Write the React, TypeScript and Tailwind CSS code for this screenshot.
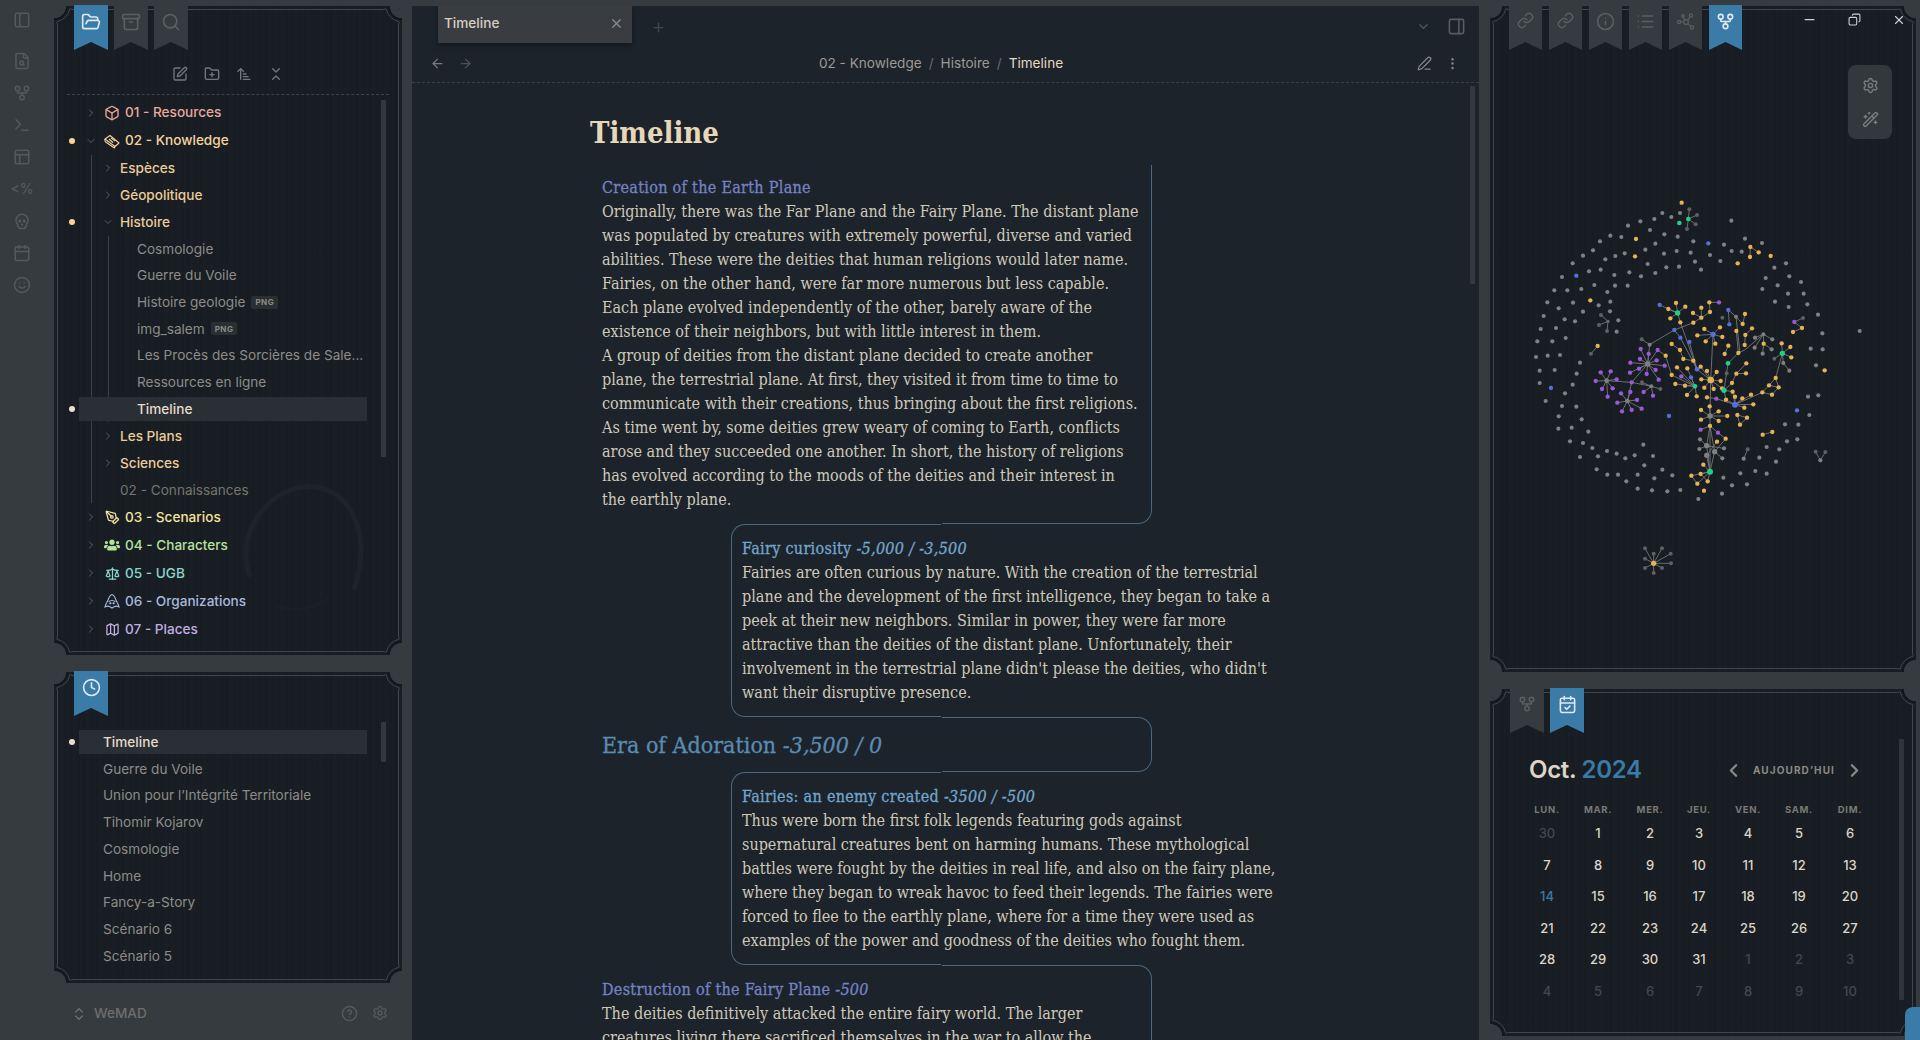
import React from "react";
import {
  FolderOpen, Archive, Search, SquarePen, FolderPlus, ArrowUpNarrowWide, ChevronsDownUp, Clock,
  ChevronRight, ChevronDown, Box, PenTool, Scale, Map as MapIcon, PanelLeft, FileSearch, GitFork,
  Terminal, PanelsTopLeft, Skull, Calendar, Smile, X, Plus, ArrowLeft, ArrowRight, PanelRight, PenLine,
  EllipsisVertical, Minus, Copy, Link, Info, List, Settings, WandSparkles, CalendarCheck, ChevronsUpDown,
  CircleHelp, ChevronLeft,
} from "lucide-react";
import { FaUsers } from "react-icons/fa";

const SANS = "font-['Inter','Liberation_Sans',sans-serif]";
const SERIF = "font-['DejaVu_Serif_Condensed','DejaVu_Serif',serif]";
const GRAIN =
  "bg-[#171d23] bg-[repeating-linear-gradient(90deg,rgba(255,255,255,0.007)_0px,rgba(255,255,255,0)_3px,rgba(0,0,0,0.035)_4px,rgba(255,255,255,0.006)_7px,rgba(0,0,0,0)_11px,rgba(0,0,0,0.03)_13px)]";

function Corner({ cls }: { cls: string }) {
  return (
    <svg width="18" height="18" viewBox="0 0 18 18" className={`absolute z-10 ${cls}`}>
      <rect width="18" height="18" fill="#171d23" />
      <path d="M0 0H13A13 13 0 0 1 0 13Z" fill="#363b3f" />
      <path d="M13 0A13 13 0 0 1 0 13" fill="none" stroke="#11161a" strokeWidth="1.5" />
      <path d="M18 3H15.7A16 16 0 0 1 3 15.7V18" fill="none" stroke="#40474c" strokeWidth="1" />
    </svg>
  );
}

function Panel({ className, children }: { className: string; children: React.ReactNode }) {
  return (
    <div className={`relative ${GRAIN} ${className}`}>
      <div className="absolute inset-[3px] border border-[#40474c] pointer-events-none" />
      <Corner cls="left-0 top-0" />
      <Corner cls="right-0 top-0 -scale-x-100" />
      <Corner cls="left-0 bottom-0 -scale-y-100" />
      <Corner cls="right-0 bottom-0 -scale-x-100 -scale-y-100" />
      <div className="relative z-20 h-full flex flex-col">{children}</div>
    </div>
  );
}

function Ribbon({ active, w, children }: { active?: boolean; w: string; children: React.ReactNode }) {
  return (
    <div
      className={`${w} h-[45px] pt-[7px] flex justify-center [clip-path:polygon(0_0,100%_0,100%_100%,50%_82%,0_100%)] ${
        active ? "bg-[#3a7ba8] text-[#dfe9ee]" : "bg-[#363b3f] text-[#5a5f62]"
      }`}
    >
      {children}
    </div>
  );
}

function Dot({ cls, color }: { cls: string; color: string }) {
  return <span className={`absolute top-1/2 -translate-y-1/2 w-[6px] h-[6px] rounded-full ${cls} ${color}`} />;
}

function Top({ icon, label, color, open, dot }: { icon: React.ReactNode; label: string; color: string; open?: boolean; dot?: boolean }) {
  return (
    <div className="relative h-[28px] flex items-center pl-[31px]">
      {dot && <Dot cls="left-[15px]" color="bg-[#fbd398]" />}
      <span className="w-[12px] flex justify-center text-[#6c7073]">
        {open ? <ChevronDown size={16} strokeWidth={1.6} /> : <ChevronRight size={16} strokeWidth={1.6} />}
      </span>
      <span className={`ml-[7px] w-[16px] flex justify-center ${color}`}>{icon}</span>
      <span className={`ml-[5px] text-[13.6px] font-medium ${color}`}>{label}</span>
    </div>
  );
}

function Sub({ label, open, dot }: { label: string; open?: boolean; dot?: boolean }) {
  return (
    <div className="relative h-[27px] flex items-center pl-[10px]">
      {dot && <Dot cls="left-[-23px]" color="bg-[#fbd398]" />}
      <span className="w-[12px] flex justify-center text-[#6c7073]">
        {open ? <ChevronDown size={16} strokeWidth={1.6} /> : <ChevronRight size={16} strokeWidth={1.6} />}
      </span>
      <span className="ml-[6px] text-[13.6px] font-medium text-[#eccb98]">{label}</span>
    </div>
  );
}

function File({ label, tag, active }: { label: string; tag?: boolean; active?: boolean }) {
  return (
    <div className="relative h-[26.7px] flex items-center pl-[28px]">
      {active && (
        <>
          <span className="absolute left-[-30px] w-[288px] top-[1px] bottom-[1px] bg-[#292f34]" />
          <Dot cls="left-[-40px]" color="bg-[#eadfcd]" />
        </>
      )}
      <span className={`relative text-[13.6px] whitespace-nowrap ${active ? "text-[#e6dccb] font-medium" : "text-[#8d8c88]"}`}>{label}</span>
      {tag && (
        <span className="ml-[6px] px-[4px] h-[13px] flex items-center rounded-[2px] bg-[#2a2f33] text-[8px] font-bold tracking-[0.5px] text-[#8a8a86]">
          PNG
        </span>
      )}
    </div>
  );
}

function BookIcon() {
  return (
    <svg width="16" height="16" viewBox="0 0 16 16" fill="none" stroke="currentColor" strokeWidth="1.1" strokeLinejoin="round">
      <path d="M1 6L6 2.5L15 10L11 13.5Z" />
      <path d="M1 6C0.6 7.5 1 8.5 2 9.2L10.5 15L11 13.5" />
      <path d="M5 6L9 9.5M7 4.8L11 8.2" />
    </svg>
  );
}

function Hood() {
  return (
    <svg width="16" height="16" viewBox="0 0 16 16" fill="none" stroke="currentColor" strokeWidth="1.1">
      <path d="M1 14C1.5 11 3 9.5 4 7C5 4 6.5 2 8 1.5C9.5 2 11 4 12 7C13 9.5 14.5 11 15 14C13 12.8 11.5 12.8 10 13.8L8 15L6 13.8C4.5 12.8 3 12.8 1 14Z" />
      <path d="M4.5 9C6 7 10 7 11.5 9" />
      <circle cx="6.4" cy="10.3" r=".6" fill="currentColor" />
      <circle cx="9.6" cy="10.3" r=".6" fill="currentColor" />
    </svg>
  );
}

function Tree() {
  return (
    <div className={`relative flex-1 ${SANS}`}>
      <svg width="140" height="140" viewBox="0 0 140 140" fill="none" className="absolute left-[178px] top-[378px]">
        <path d="M18 100C0 50 45 4 85 10C125 18 138 65 122 112" stroke="#1d2429" strokeWidth="5" />
        <path d="M42 128C60 136 80 132 96 122" stroke="#1a2126" strokeWidth="3" />
      </svg>
      <div className="relative">
        <Top icon={<Box size={16} />} label="01 - Resources" color="text-[#e8a89c]" />
        <Top icon={<BookIcon />} label="02 - Knowledge" color="text-[#f6d39c]" open dot />
        <div className="ml-[37px] border-l border-[#3b4146]">
          <Sub label="Espèces" />
          <Sub label="Géopolitique" />
          <Sub label="Histoire" open dot />
          <div className="ml-[16px] border-l border-[#3b4146]">
            <File label="Cosmologie" />
            <File label="Guerre du Voile" />
            <File label="Histoire geologie" tag />
            <File label="img_salem" tag />
            <File label="Les Procès des Sorcières de Sale..." />
            <File label="Ressources en ligne" />
            <File label="Timeline" active />
          </div>
          <Sub label="Les Plans" />
          <Sub label="Sciences" />
          <div className="h-[27px] flex items-center pl-[28px] text-[13.6px] text-[#75756f]">02 - Connaissances</div>
        </div>
        <Top icon={<PenTool size={15} />} label="03 - Scenarios" color="text-[#f4e29c]" />
        <Top icon={<FaUsers size={16} />} label="04 - Characters" color="text-[#b5e19c]" />
        <Top icon={<Scale size={15} />} label="05 - UGB" color="text-[#8ad4cb]" />
        <Top icon={<Hood />} label="06 - Organizations" color="text-[#a9b9dd]" />
        <Top icon={<MapIcon size={15} />} label="07 - Places" color="text-[#c1aee0]" />
      </div>
    </div>
  );
}

const RECENT = ["Guerre du Voile", "Union pour l’Intégrité Territoriale", "Tihomir Kojarov", "Cosmologie", "Home", "Fancy-a-Story", "Scénario 6", "Scénario 5"];

function Left() {
  return (
    <div className="w-[348px] flex flex-col pt-[6px]">
      <Panel className="h-[649px] shrink-0">
        <div className="flex gap-[6px] pl-[20px] -mt-[1px]">
          <Ribbon active w="w-[34px]"><FolderOpen size={20} /></Ribbon>
          <Ribbon w="w-[34px]"><Archive size={20} /></Ribbon>
          <Ribbon w="w-[34px]"><Search size={20} /></Ribbon>
        </div>
        <div className="mx-[13px] h-[45px] border-b border-dashed border-[#3c4247] flex items-center justify-center gap-[16px] text-[#74777a] pt-[4px]">
          <SquarePen size={16} />
          <FolderPlus size={16} />
          <ArrowUpNarrowWide size={16} />
          <ChevronsDownUp size={16} />
        </div>
        <div className="h-[3.5px]" />
        <Tree />
        <span className="absolute left-[327px] top-[94px] w-[5px] h-[357px] bg-[#32383d] rounded-[1px]" />
      </Panel>
      <Panel className="h-[311px] mt-[17px] shrink-0">
        <div className="flex pl-[20px] -mt-[1px]">
          <Ribbon active w="w-[34px]"><Clock size={19} /></Ribbon>
        </div>
        <div className={`mt-[12.5px] ${SANS}`}>
          <div className="relative h-[26.8px] flex items-center pl-[49px]">
            <span className="absolute left-[25px] w-[288px] top-[1px] bottom-[1px] bg-[#292f34]" />
            <Dot cls="left-[15px]" color="bg-[#eadfcd]" />
            <span className="relative text-[13.6px] font-medium text-[#e6dccb]">Timeline</span>
          </div>
          {RECENT.map((r) => (
            <div key={r} className="h-[26.8px] flex items-center pl-[49px] text-[13.6px] text-[#8d8c88]">{r}</div>
          ))}
        </div>
        <span className="absolute left-[327px] top-[50px] w-[5px] h-[40px] bg-[#32383d] rounded-[1px]" />
      </Panel>
      <div className={`flex-1 flex items-center pl-[17px] pr-[14px] pt-[4px] ${SANS} text-[#6f6e6a]`}>
        <ChevronsUpDown size={16} />
        <span className="ml-[7px] text-[13.6px] font-medium">WeMAD</span>
        <span className="ml-auto flex gap-[14px] text-[#565a5d]"><CircleHelp size={17} /><Settings size={16} /></span>
      </div>
    </div>
  );
}

const LEFT_ICONS = [FileSearch, GitFork, Terminal, PanelsTopLeft];

function Rail() {
  return (
    <div className={`w-[54px] flex flex-col items-center pt-[11px] pr-[10px] text-[#54595c] ${SANS}`}>
      <PanelLeft size={18} />
      <div className="h-[23px]" />
      <div className="flex flex-col items-center gap-[14px]">
        {LEFT_ICONS.map((I, i) => <I key={i} size={18} />)}
        <span className="h-[18px] text-[14px] font-medium leading-[18px]">&lt;%</span>
        <Skull size={18} />
        <Calendar size={18} />
        <Smile size={18} />
      </div>
    </div>
  );
}

function Block({ side, top = false, bottom = true, className, children }: { side: "l" | "r"; top?: boolean; bottom?: boolean; className: string; children: React.ReactNode }) {
  const deco =
    side === "r"
      ? `right-0 border-r ${top ? "border-t rounded-tr-[14px]" : ""} ${bottom ? "border-b rounded-br-[14px]" : ""}`
      : `left-0 border-l ${top ? "border-t rounded-tl-[14px]" : ""} ${bottom ? "border-b rounded-bl-[14px]" : ""}`;
  return (
    <div className={`relative ${className}`}>
      <span className={`absolute top-0 bottom-0 w-[210px] border-[#4b6682] ${deco}`} />
      <div className="relative">{children}</div>
    </div>
  );
}

function Lines({ lines }: { lines: string[] }) {
  return (
    <>
      {lines.map((l) => (
        <div key={l} className="whitespace-nowrap">{l}</div>
      ))}
    </>
  );
}

function Center() {
  return (
    <div className="w-[1067px] mt-[6px] ml-[10px] bg-[#1c232b] flex flex-col relative overflow-hidden">
      <div className={`h-[37px] shrink-0 flex items-start pl-[26px] ${SANS}`}>
        <div className="w-[194px] h-[37px] bg-[#393d41] flex items-center pl-[6px] pr-[8px] pb-[2px] shadow-[0_2px_6px_rgba(0,0,0,0.35)]">
          <span className="text-[13.6px] font-medium text-[#d6cfc2]">Timeline</span>
          <X size={15} className="ml-auto text-[#8d8d8a]" />
        </div>
        <Plus size={15} className="ml-[19px] mt-[14px] text-[#42474b]" />
        <div className="ml-auto flex items-center gap-[16px] pr-[13px] pt-[11px] text-[#585c5f]">
          <ChevronDown size={15} />
          <PanelRight size={19} />
        </div>
      </div>
      <div className={`h-[40px] shrink-0 flex items-center border-b border-dashed border-[#3a4045] pl-[18px] pr-[19px] pt-[2px] ${SANS}`}>
        <ArrowLeft size={15} className="text-[#77797a]" />
        <ArrowRight size={15} className="ml-[13px] text-[#4e5255]" />
        <div className="flex-1 flex justify-center gap-[7px] text-[13.6px] text-[#9d9a93] pr-[8px]">
          <span>02 - Knowledge</span><span className="text-[#6a6c6c]">/</span><span>Histoire</span><span className="text-[#6a6c6c]">/</span>
          <span className="text-[#e4d9c4]">Timeline</span>
        </div>
        <PenLine size={15} className="text-[#85868a]" />
        <EllipsisVertical size={15} className="ml-[13px] text-[#85868a]" />
      </div>
      <span className="absolute left-[1058px] top-[80px] w-[5px] h-[198px] bg-[#33393e] rounded-[1px]" />
      <div className={`pl-[178px] ${SERIF} text-[#cfc9b8] text-[16px] leading-[24px]`}>
        <h1 className="h-[82px] pt-[30px] text-[29px] leading-[40px] font-bold text-[#e6d6ba]">Timeline</h1>
        <Block side="r" className="w-[562px] h-[359px] pt-[11px] pl-[12px]">
          <div className="text-[#7682c4] tracking-[0.3px] [-webkit-text-stroke:0.3px]">Creation of the Earth Plane</div>
          <Lines lines={[
            "Originally, there was the Far Plane and the Fairy Plane. The distant plane",
            "was populated by creatures with extremely powerful, diverse and varied",
            "abilities. These were the deities that human religions would later name.",
            "Fairies, on the other hand, were far more numerous but less capable.",
            "Each plane evolved independently of the other, barely aware of the",
            "existence of their neighbors, but with little interest in them.",
            "A group of deities from the distant plane decided to create another",
            "plane, the terrestrial plane. At first, they visited it from time to time to",
            "communicate with their creations, thus bringing about the first religions.",
            "As time went by, some deities grew weary of coming to Earth, conflicts",
            "arose and they succeeded one another. In short, the history of religions",
            "has evolved according to the moods of the deities and their interest in",
            "the earthly plane.",
          ]} />
        </Block>
        <Block side="l" top className="ml-[141px] w-[549px] h-[193px] pt-[13px] pl-[11px]">
          <div className="text-[#74a6cb] tracking-[0.3px] [-webkit-text-stroke:0.3px]">Fairy curiosity <i>-5,000 / -3,500</i></div>
          <Lines lines={[
            "Fairies are often curious by nature. With the creation of the terrestrial",
            "plane and the development of the first intelligence, they began to take a",
            "peek at their new neighbors. Similar in power, they were far more",
            "attractive than the deities of the distant plane. Unfortunately, their",
            "involvement in the terrestrial plane didn't please the deities, who didn't",
            "want their disruptive presence.",
          ]} />
        </Block>
        <Block side="r" top className="w-[562px] h-[55px] pl-[12px] flex items-center">
          <div className="text-[23px] leading-[32px] text-[#5a8bb0] whitespace-nowrap [-webkit-text-stroke:0.3px]">Era of Adoration <i>-3,500 / 0</i></div>
        </Block>
        <Block side="l" top className="ml-[141px] w-[549px] h-[193px] pt-[13px] pl-[11px]">
          <div className="text-[#74a6cb] tracking-[0.3px] [-webkit-text-stroke:0.3px]">Fairies: an enemy created <i>-3500 / -500</i></div>
          <Lines lines={[
            "Thus were born the first folk legends featuring gods against",
            "supernatural creatures bent on harming humans. These mythological",
            "battles were fought by the deities in real life, and also on the fairy plane,",
            "where they began to wreak havoc to feed their legends. The fairies were",
            "forced to flee to the earthly plane, where for a time they were used as",
            "examples of the power and goodness of the deities who fought them.",
          ]} />
        </Block>
        <Block side="r" top bottom={false} className="w-[562px] h-[100px] pt-[13px] pl-[12px]">
          <div className="text-[#7682c4] tracking-[0.3px] [-webkit-text-stroke:0.3px]">Destruction of the Fairy Plane <i>-500</i></div>
          <Lines lines={[
            "The deities definitively attacked the entire fairy world. The larger",
            "creatures living there sacrificed themselves in the war to allow the",
          ]} />
        </Block>
      </div>
    </div>
  );
}

const GRAY = "517,99 544,111 570,99 493,117 451,124 414,137 480,150 523,163 563,170 394,171 361,167 330,184 309,211 279,227 248,250 216,291 193,331 172,367 161,408 152,447 142,484 138,531 149,572 149,609 167,663 206,709 205,746 240,784 270,831 320,868 352,884 384,884 409,904 443,926 486,931 532,934 571,930 625,957 696,941 726,916 771,913 700,893 751,880 796,873 830,881 858,845 808,833 830,801 868,808 891,784 922,778 925,734 885,733 958,705 954,650 985,646 978,556 962,506 998,508 997,460 984,404 952,373 941,341 933,306 898,289 888,250 853,263 827,294 863,316 817,327 894,341 855,365 896,381 816,189 765,176 724,122 702,194 725,213 755,215 691,243 660,225 610,184 496,191 466,209 404,220 376,228 346,238 522,221 560,213 602,218 473,252 529,262 567,260 615,245 633,269 496,279 453,289 418,277 373,285 332,269 297,274 313,315 274,327 232,331 249,368 206,385 279,395 224,418 255,424 198,444 187,484 227,474 173,527 210,525 194,570 270,548 260,581 248,614 225,640 216,678 259,680 275,718 245,743 295,755 279,789 307,804 351,813 380,821 406,835 434,826 489,828 460,794 463,856 517,869 547,886 493,895 443,884 324,829 352,336 375,317 413,317 361,365 326,376 360,394 385,421 380,455 1109,453 761,836 795,473 847,478 794,503 845,508 818,521 880,549 898,572 630,778 628,807 702,805 697,835 991,841";
const DIM = "333,405 327,435 351,453 303,521 598,88 621,105 617,133 591,147 977,815 1006,816 773,808 939,414 853,536 697,413 710,580 456,607 511,627 455,478 465,1105 491,1121 516,1105 542,1121 543,1150 516,1164 491,1179 465,1164 465,1136";
const ORANGE = "575,68 438,177 435,229 301,361 743,250 842,228 781,201 806,217 780,231 1004,571 909,456 936,444 818,764 847,756 323,498 558,369 586,380 535,387 541,415 571,427 609,399 634,383 660,396 658,367 634,413 610,428 643,447 690,442 622,466 697,471 647,484 676,491 545,492 570,510 527,527 580,537 610,542 545,585 561,562 592,565 632,560 651,573 680,576 634,598 556,612 585,617 591,645 620,649 643,623 671,627 692,603 696,625 726,609 745,519 704,522 715,497 739,453 758,432 765,402 786,445 766,465 764,495 821,491 875,490 901,501 904,532 769,550 768,580 739,581 857,594 866,622 837,616 817,637 846,644 783,644 790,673 763,683 757,655 735,650 728,635 708,659 651,652 633,690 659,679 686,694 712,708 633,719 686,723 660,738 742,705 771,713 750,734 707,776 681,785 640,854 604,887 632,882 622,911 653,904 642,932";
const BLUE = "655,190 259,287 183,624 537,708 921,691 509,375 553,450 571,473 598,486 603,592 715,390 718,433";
const PURPLE = "913,426 687,367 679,656 632,749 684,758 574,589 452,507 476,522 503,510 450,537 421,548 500,541 524,557 447,566 497,570 420,578 470,582 506,599 332,577 362,574 380,598 317,603 336,627 368,625 353,650 393,640 421,636 441,660 382,668 396,694 425,690 455,686 425,607 461,636 489,647";
const GREEN = "568,129 595,117 714,550";
const EDGES = "354,424 333,405|354,424 327,435|354,424 351,453|303,521 323,498|595,117 598,88|595,117 621,105|595,117 617,133|595,117 591,147|781,201 806,217|781,201 780,231|909,456 936,444|936,444 913,426|913,426 939,414|818,764 847,756|773,808 761,836|977,815 991,841|1006,816 991,841|491,1150 465,1105|491,1150 491,1121|491,1150 516,1105|491,1150 542,1121|491,1150 543,1150|491,1150 516,1164|491,1150 491,1179|491,1150 465,1164|491,1150 465,1136|479,494 553,450|553,450 610,428|610,428 634,413|634,413 609,399|634,413 634,383|634,413 660,396|660,396 658,367|658,367 687,367|563,399 509,375|563,399 558,369|563,399 586,380|563,399 535,387|563,399 541,415|563,399 571,427|571,427 621,568|571,473 621,568|598,486 621,568|553,450 571,473|669,463 662,600|669,463 643,447|669,463 690,442|669,463 622,466|669,463 697,471|669,463 647,484|669,463 676,491|621,568 662,600|545,492 570,510|570,510 580,537|580,537 610,542|610,542 621,568|527,527 545,585|545,585 615,619|561,562 615,619|592,565 615,619|574,589 615,619|603,592 615,619|556,612 615,619|585,617 615,619|591,645 615,619|620,649 615,619|643,623 662,600|632,560 662,600|651,573 662,600|680,576 662,600|634,598 662,600|671,627 662,600|692,603 662,600|696,625 662,600|702,631 726,609|702,631 728,635|702,631 708,659|702,631 714,550|714,550 745,519|745,519 764,510|764,510 820,463|820,463 795,473|820,463 847,478|820,463 794,503|820,463 821,491|821,491 845,508|821,491 818,521|738,410 715,390|715,390 718,433|738,410 758,432|758,432 765,402|738,410 750,519|739,453 745,519|704,522 715,497|786,445 766,465|766,465 764,495|877,520 875,490|877,520 901,501|877,520 904,532|877,520 853,536|877,520 880,549|880,549 898,572|877,520 857,594|857,594 866,622|866,622 837,616|837,616 817,637|866,622 846,644|817,637 846,644|857,594 837,616|817,637 735,674|769,550 739,581|768,580 739,581|739,581 726,609|735,674 783,644|735,674 790,673|735,674 763,683|735,674 757,655|735,674 735,650|735,674 708,659|735,674 728,635|735,674 679,656|679,656 651,652|662,600 660,708|660,708 633,690|660,708 659,679|660,708 686,694|660,708 712,708|660,708 633,719|660,708 686,723|660,708 660,738|742,705 771,713|771,713 750,734|742,705 750,734|660,738 684,758|684,758 707,776|660,738 632,749|660,738 650,797|660,738 674,815|650,797 630,778|650,797 628,807|650,797 702,805|674,815 697,835|674,815 707,776|650,826 681,785|650,826 660,875|674,815 660,875|650,797 660,875|660,738 660,875|660,875 640,854|660,875 632,882|660,875 604,887|660,875 622,911|660,875 653,904|604,887 622,911|632,882 653,904|479,494 455,478|479,494 473,552|473,552 452,507|473,552 476,522|473,552 503,510|473,552 450,537|473,552 421,548|473,552 500,541|473,552 524,557|473,552 447,566|473,552 497,570|473,552 420,578|473,552 470,582|473,552 506,599|473,552 425,607|503,510 527,527|350,602 332,577|350,602 362,574|350,602 380,598|350,602 317,603|350,602 336,627|350,602 368,625|350,602 353,650|350,602 425,607|412,663 393,640|412,663 421,636|412,663 441,660|412,663 382,668|412,663 396,694|412,663 425,690|412,663 455,686|412,663 425,607|425,607 484,619|484,619 456,607|484,619 511,627|484,619 461,636|484,619 489,647";

const pts = (s: string) => s.split(" ").map((p) => p.split(",").map(Number));

function Graph() {
  const big: [number, number, string, number][] = [
    [479, 494, "#7f7f7f", 6], [473, 552, "#7f7f7f", 8], [350, 602, "#7f7f7f", 7], [412, 663, "#7f7f7f", 7], [484, 619, "#7f7f7f", 6],
    [660, 708, "#7f7f7f", 8], [650, 797, "#7f7f7f", 8], [650, 826, "#7f7f7f", 8], [674, 815, "#7f7f7f", 8], [820, 463, "#7f7f7f", 6],
    [738, 410, "#7f7f7f", 6], [354, 424, "#6c6c6c", 5], [662, 600, "#e6b352", 10], [491, 1150, "#e6b352", 8], [669, 463, "#5470dc", 8],
    [621, 568, "#5470dc", 7], [735, 674, "#5470dc", 9], [563, 399, "#1fd186", 8], [615, 619, "#1fd186", 7], [702, 631, "#1fd186", 8],
    [877, 520, "#1fd186", 8], [660, 875, "#1fd186", 9],
  ];
  return (
    <svg width="430" height="420" viewBox="0 0 1290 1260" className="absolute left-0 top-[174px]">
      <g stroke="#8a8a8a" strokeWidth="2.6" opacity=".85">
        {EDGES.split("|").map((e, i) => {
          const [a, b] = pts(e);
          return <line key={i} x1={a[0]} y1={a[1]} x2={b[0]} y2={b[1]} />;
        })}
      </g>
      {pts(GRAY).map(([x, y], i) => <circle key={`g${i}`} cx={x} cy={y} r="6.2" fill="#808183" />)}
      {pts(DIM).map(([x, y], i) => <circle key={`d${i}`} cx={x} cy={y} r="6" fill="#5f6062" />)}
      {pts(ORANGE).map(([x, y], i) => <circle key={`o${i}`} cx={x} cy={y} r="6.5" fill="#e6b352" />)}
      {pts(BLUE).map(([x, y], i) => <circle key={`b${i}`} cx={x} cy={y} r="6.5" fill="#5470dc" />)}
      {pts(PURPLE).map(([x, y], i) => <circle key={`p${i}`} cx={x} cy={y} r="6.5" fill="#9b58d9" />)}
      {pts(GREEN).map(([x, y], i) => <circle key={`n${i}`} cx={x} cy={y} r="7" fill="#1fd186" />)}
      {big.map(([x, y, c, r], i) => <circle key={`h${i}`} cx={x} cy={y} r={r} fill={c} />)}
    </svg>
  );
}

function LinkTab({ dir }: { dir: "l" | "r" }) {
  return (
    <span className="relative">
      <Link size={17} />
      {dir === "l" ? <ArrowLeft size={9} className="absolute -right-[3px] -bottom-[2px]" /> : <ArrowRight size={9} className="absolute -right-[3px] -bottom-[2px]" />}
    </span>
  );
}

function NetIcon() {
  return (
    <svg width="19" height="19" viewBox="0 0 19 19" fill="none" stroke="currentColor" strokeWidth="1.2">
      <circle cx="10" cy="10" r="2.4" /><circle cx="3" cy="10" r="1.6" /><circle cx="15" cy="3.5" r="1.6" /><circle cx="16" cy="15.5" r="1.6" /><circle cx="7" cy="4" r="1.3" />
      <path d="M4.6 10H7.6M11.8 8.4L14 4.8M11.8 11.6L14.8 14.4M8.8 8L7.4 5.2" />
    </svg>
  );
}

const HEAD = ["LUN.", "MAR.", "MER.", "JEU.", "VEN.", "SAM.", "DIM."];
const DAYS: [string, number][] = [
  ["30", 0], ["1", 1], ["2", 1], ["3", 1], ["4", 1], ["5", 1], ["6", 1],
  ["7", 1], ["8", 1], ["9", 1], ["10", 1], ["11", 1], ["12", 1], ["13", 1],
  ["14", 2], ["15", 1], ["16", 1], ["17", 1], ["18", 1], ["19", 1], ["20", 1],
  ["21", 1], ["22", 1], ["23", 1], ["24", 1], ["25", 1], ["26", 1], ["27", 1],
  ["28", 1], ["29", 1], ["30", 1], ["31", 1], ["1", 0], ["2", 0], ["3", 0],
  ["4", 0], ["5", 0], ["6", 0], ["7", 0], ["8", 0], ["9", 0], ["10", 0],
];

function Right() {
  return (
    <div className="w-[426px] ml-[11px] pt-[6px] flex flex-col">
      <Panel className="h-[666px] shrink-0">
        <div className="flex gap-[7px] pl-[19px] -mt-[1px]">
          <Ribbon w="w-[33px]"><LinkTab dir="l" /></Ribbon>
          <Ribbon w="w-[33px]"><LinkTab dir="r" /></Ribbon>
          <Ribbon w="w-[33px]"><Info size={19} /></Ribbon>
          <Ribbon w="w-[33px]"><List size={19} /></Ribbon>
          <Ribbon w="w-[33px]"><NetIcon /></Ribbon>
          <Ribbon active w="w-[33px]"><GitFork size={19} /></Ribbon>
        </div>
        <Graph />
        <div className="absolute left-[358px] top-[59px] w-[44px] h-[74px] rounded-[8px] bg-[#33383c] flex flex-col items-center justify-center gap-[17px] text-[#7a7c7d]">
          <Settings size={17} />
          <WandSparkles size={17} />
        </div>
      </Panel>
      <Panel className="h-[347px] mt-[17px] shrink-0">
        <div className="flex gap-[6px] pl-[20px] -mt-[1px]">
          <Ribbon w="w-[34px]"><GitFork size={18} /></Ribbon>
          <Ribbon active w="w-[34px]"><CalendarCheck size={19} /></Ribbon>
        </div>
        <div className={`pl-[32px] ${SANS} text-[#ddd5c6]`}>
          <div className="mt-[21px] h-[32px] flex items-center w-[343px] pl-[7px]">
            <span className="text-[24px] font-semibold tracking-[-0.3px]">Oct. <span className="text-[#3a7ba8]">2024</span></span>
            <ChevronLeft size={21} strokeWidth={2.6} className="ml-auto text-[#8b8a85]" />
            <span className="mx-[9px] text-[10px] font-bold tracking-[1.1px] text-[#8b8a85]">AUJOURD’HUI</span>
            <ChevronRight size={21} strokeWidth={2.6} className="text-[#8b8a85]" />
          </div>
          <div className="mt-[16px] grid grid-cols-[50px_52px_52px_46px_52px_50px_52px] text-center">
            {HEAD.map((h) => (
              <div key={h} className="h-[16px] text-[9.5px] font-bold tracking-[0.7px] text-[#7a7975] leading-[16px]">{h}</div>
            ))}
            {DAYS.map(([d, k], i) => (
              <div
                key={i}
                className={`h-[31.5px] flex items-center justify-center text-[13px] font-medium ${
                  k === 0 ? "text-[#44484b]" : k === 2 ? "text-[#3a7ba8]" : "text-[#dcd5c8]"
                }`}
              >
                {d}
              </div>
            ))}
          </div>
        </div>
        <span className="absolute left-[409px] top-[50px] w-[5px] h-[261px] bg-[#2f353a] rounded-[1px]" />
      </Panel>
    </div>
  );
}

export default function App() {
  return (
    <div className="relative w-[1920px] h-[1040px] overflow-hidden bg-[#363b3f] flex">
      <Rail />
      <Left />
      <Center />
      <Right />
      <div className="absolute z-30 top-[12px] left-[1802px] w-[104px] flex justify-between text-[#cfcfcf]">
        <Minus size={15} />
        <Copy size={13} className="mt-[1px] -scale-x-100" />
        <X size={14} className="mt-[1px]" />
      </div>
      <span className="absolute z-30 left-[1905px] top-[1007px] w-[15px] h-[33px] bg-[#3a7ba8] rounded-tl-[8px]" />
    </div>
  );
}
